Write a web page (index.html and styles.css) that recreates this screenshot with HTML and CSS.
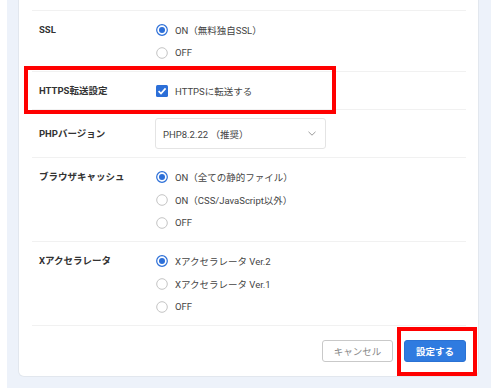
FILE: index.html
```html
<!DOCTYPE html>
<html lang="ja">
<head>
    <meta charset="UTF-8">
    <meta name="viewport" content="width=device-width, initial-scale=1.0">
    <title>サイト設定</title>
    <link rel="stylesheet" href="styles.css">
</head>
<body>
    <div class="page">
        <div class="settings-card">
            <div class="setting-row">
                <div class="setting-label">SSL</div>
                <div class="setting-value">
                    <label class="option">
                        <svg class="radio" viewBox="0 0 12 12"><circle cx="6" cy="6" r="5.3" class="ring on"/><circle cx="6" cy="6" r="3" class="dot"/></svg>
                        ON（無料独自SSL）
                    </label>
                    <label class="option">
                        <svg class="radio" viewBox="0 0 12 12"><circle cx="6" cy="6" r="5.3" class="ring"/></svg>
                        OFF
                    </label>
                </div>
            </div>

            <div class="setting-row">
                <div class="setting-label">HTTPS転送設定</div>
                <div class="setting-value">
                    <label class="option">
                        <svg class="checkbox" viewBox="0 0 12 12"><rect x="0" y="0" width="12" height="12" rx="1.5" fill="#2c6fd8"/><path d="M2.6 6.2 L5 8.6 L9.6 3.4" fill="none" stroke="#fff" stroke-width="1.7"/></svg>
                        HTTPSに転送する
                    </label>
                </div>
            </div>

            <div class="setting-row select-row">
                <div class="setting-label">PHPバージョン</div>
                <div class="setting-value">
                    <div class="select-box">
                        <span>PHP8.2.22 （推奨）</span>
                        <svg class="chevron" viewBox="0 0 8 5"><path d="M0.5 0.8 L4 4.2 L7.5 0.8" fill="none" stroke="#9a9a9a" stroke-width="1"/></svg>
                    </div>
                </div>
            </div>

            <div class="setting-row">
                <div class="setting-label">ブラウザキャッシュ</div>
                <div class="setting-value">
                    <label class="option">
                        <svg class="radio" viewBox="0 0 12 12"><circle cx="6" cy="6" r="5.3" class="ring on"/><circle cx="6" cy="6" r="3" class="dot"/></svg>
                        ON（全ての静的ファイル）
                    </label>
                    <label class="option">
                        <svg class="radio" viewBox="0 0 12 12"><circle cx="6" cy="6" r="5.3" class="ring"/></svg>
                        ON（CSS/JavaScript以外）
                    </label>
                    <label class="option">
                        <svg class="radio" viewBox="0 0 12 12"><circle cx="6" cy="6" r="5.3" class="ring"/></svg>
                        OFF
                    </label>
                </div>
            </div>

            <div class="setting-row">
                <div class="setting-label">Xアクセラレータ</div>
                <div class="setting-value">
                    <label class="option">
                        <svg class="radio" viewBox="0 0 12 12"><circle cx="6" cy="6" r="5.3" class="ring on"/><circle cx="6" cy="6" r="3" class="dot"/></svg>
                        Xアクセラレータ Ver.2
                    </label>
                    <label class="option">
                        <svg class="radio" viewBox="0 0 12 12"><circle cx="6" cy="6" r="5.3" class="ring"/></svg>
                        Xアクセラレータ Ver.1
                    </label>
                    <label class="option">
                        <svg class="radio" viewBox="0 0 12 12"><circle cx="6" cy="6" r="5.3" class="ring"/></svg>
                        OFF
                    </label>
                </div>
            </div>

            <div class="form-footer">
                <button class="btn btn-cancel">キャンセル</button>
                <button class="btn btn-submit">設定する</button>
            </div>
        </div>

        <!-- 注目枠 -->
        <div class="highlight highlight-https"></div>
        <div class="highlight highlight-submit"></div>
    </div>
</body>
</html>
```

FILE: styles.css
```css
:root {
    --bg-color: #edf2fa;
    --card-color: #ffffff;
    --primary-color: #2c6fd8;
    --text-color: #333333;
    --line-color: #f1f1f1;
}

body {
    font-family: Roboto, 'Noto Sans CJK JP', sans-serif;
    background-color: #ffffff;
    color: var(--text-color);
    margin: 0 9px 4px 7px;
}

.page {
    position: relative;
    background-color: var(--bg-color);
    padding: 0 12px 11px 11px;
}

.settings-card {
    background-color: var(--card-color);
    border: 1px solid #e2e7ee;
    border-top: none;
    border-radius: 0 0 6px 6px;
    padding: 10px 12px 0 13px;
}

.setting-row {
    display: grid;
    grid-template-columns: 116px 1fr;
    padding: 7px 7px;
    border-top: 1px solid var(--line-color);
}

.select-row {
    padding: 8px 7px;
}

.setting-label {
    font-size: 9.5px;
    font-weight: 700;
    line-height: 23px;
    color: #333;
}

.select-row .setting-label {
    line-height: 31px;
}

.option {
    display: flex;
    align-items: center;
    gap: 7px;
    height: 23px;
    padding-left: 1px;
    font-size: 9.5px;
    color: #444;
}

.radio,
.checkbox {
    width: 12px;
    height: 12px;
    flex-shrink: 0;
}

.ring {
    fill: #fff;
    stroke: #c4c4c4;
    stroke-width: 1;
}

.ring.on {
    stroke: var(--primary-color);
    stroke-width: 1.2;
}

.dot {
    fill: var(--primary-color);
}

.select-box {
    display: flex;
    justify-content: space-between;
    align-items: center;
    width: 171px;
    height: 31px;
    box-sizing: border-box;
    border: 1px solid #e4e4e4;
    border-radius: 3px;
    padding: 0 9px 0 7px;
    font-size: 9.5px;
    color: #444;
}

.chevron {
    width: 8px;
    height: 5px;
}

.form-footer {
    display: flex;
    justify-content: flex-end;
    gap: 11px;
    padding: 14px 0;
    border-top: 1px solid var(--line-color);
}

.btn {
    height: 22px;
    border-radius: 3px;
    font-family: Roboto, 'Noto Sans CJK JP', sans-serif;
    font-size: 9.5px;
    cursor: pointer;
}

.btn-cancel {
    width: 71px;
    background-color: #fff;
    border: 1px solid #c9c9c9;
    color: #888;
}

.btn-submit {
    width: 62px;
    background-color: #2f7be0;
    border: 1px solid #2a72d4;
    color: #fff;
    font-weight: 700;
}

.highlight {
    position: absolute;
    border: 4px solid #ff0000;
    pointer-events: none;
}

.highlight-https {
    left: 17px;
    top: 66px;
    width: 304px;
    height: 40px;
}

.highlight-submit {
    left: 390px;
    top: 327px;
    width: 72px;
    height: 41px;
}
```
